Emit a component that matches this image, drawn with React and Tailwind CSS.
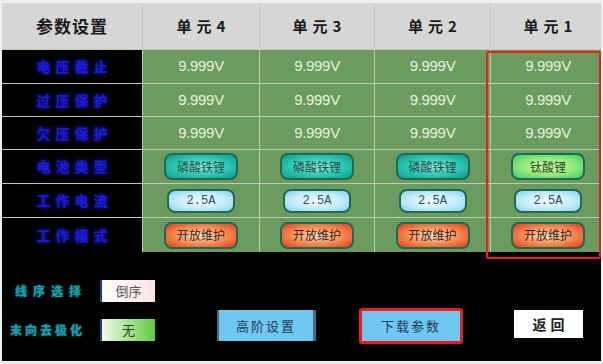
import React from "react";

const cjk = { fontFamily: '"Noto Sans CJK SC", "Noto Sans", sans-serif' };

const labels = ["电压截止", "过压保护", "欠压保护", "电池类型", "工作电流", "工作模式"];
const units = ["单元4", "单元3", "单元2", "单元1"];

function Value() {
  return (
    <div className="flex items-center justify-center bg-[#6b9b5f] text-[15px] text-[#e6f2de] font-['Liberation_Sans',sans-serif] tracking-[-0.3px]">
      9.999V
    </div>
  );
}

function Pill({ children, kind }) {
  const styles = {
    teal: "w-[74px] h-[27px] bg-[radial-gradient(ellipse_at_center,#8fe8d8_0%,#2bc6b2_55%,#0f9a8c_100%)] text-[#1f4f4a]",
    green: "w-[74px] h-[27px] bg-[radial-gradient(ellipse_at_center,#d8f8b0_0%,#8ee878_55%,#3fcc6a_100%)] text-[#234a20]",
    blue: "w-[68px] h-[24px] bg-[radial-gradient(ellipse_at_center,#f2fbff_0%,#c6ecfb_55%,#82d0f0_100%)] text-[#2b4f70]",
    red: "w-[74px] h-[27px] bg-[radial-gradient(ellipse_at_center,#f8e6c8_0%,#f4874e_55%,#ea3a1c_100%)] text-[#3a2010]",
  };
  return (
    <div className="flex items-center justify-center bg-[#6b9b5f]">
      <div
        className={`flex items-center justify-center rounded-[8px] border-[2px] border-[#1f6a52] text-[12px] ${styles[kind]}`}
        style={kind === "blue" ? { fontFamily: '"Liberation Mono", monospace' } : cjk}
      >
        {children}
      </div>
    </div>
  );
}

export default function App() {
  return (
    <div className="w-[603px] h-[364px] bg-[#eeeeee] pl-[2px] pr-[2px] pt-[3px] pb-[3px]" style={cjk}>
      <div className="relative w-full h-full bg-black overflow-hidden">
        <div className="grid grid-cols-[140px_116px_114px_115px_114px] grid-rows-[46px_33px_32px_32px_33px_33px_34px] gap-[1px] bg-[#b9cfb0]">
          <div className="flex items-center justify-center bg-[#d6d6d6] text-[17px] font-bold text-[#1a1a1a] tracking-[1px]">
            参数设置
          </div>
          {units.map((u) => (
            <div key={u} className="flex items-center justify-center bg-[#d6d6d6] text-[15px] font-bold text-[#1a1a1a] tracking-[5px] pl-[5px]">
              {u}
            </div>
          ))}

          {labels.map((l, i) => (
            <React.Fragment key={l}>
              <div className="flex items-center justify-center bg-black text-[14px] font-bold text-[#1a1ad8] tracking-[5px] pl-[5px] [text-shadow:0_0_4px_#2020ff]">
                {l}
              </div>
              {i < 3 && (
                <>
                  <Value />
                  <Value />
                  <Value />
                  <Value />
                </>
              )}
              {i === 3 && (
                <>
                  <Pill kind="teal">磷酸铁锂</Pill>
                  <Pill kind="teal">磷酸铁锂</Pill>
                  <Pill kind="teal">磷酸铁锂</Pill>
                  <Pill kind="green">钛酸锂</Pill>
                </>
              )}
              {i === 4 && (
                <>
                  <Pill kind="blue">2.5A</Pill>
                  <Pill kind="blue">2.5A</Pill>
                  <Pill kind="blue">2.5A</Pill>
                  <Pill kind="blue">2.5A</Pill>
                </>
              )}
              {i === 5 && (
                <>
                  <Pill kind="red">开放维护</Pill>
                  <Pill kind="red">开放维护</Pill>
                  <Pill kind="red">开放维护</Pill>
                  <Pill kind="red">开放维护</Pill>
                </>
              )}
            </React.Fragment>
          ))}
        </div>

        <div className="absolute left-[484px] top-[48px] w-[115px] h-[208px] border-[2px] border-[#ee1c1c] rounded-[2px] pointer-events-none" />

        <div className="flex items-start pt-[28px]">
          <div className="flex flex-col gap-[17px] pl-[8px]">
            <div className="flex items-center">
              <div className="w-[90px] pl-[5px] text-[12px] font-bold text-[#1aa0b0] tracking-[6px] [text-shadow:0_0_2px_#1aa0b0]">
                线序选择
              </div>
              <div className="flex items-center justify-center w-[55px] h-[22px] border-l-[2px] border-[#1a3a8a] bg-[linear-gradient(90deg,#ffffff_0%,#fbe4e4_100%)] text-[13px] text-[#555555]">
                倒序
              </div>
            </div>
            <div className="flex items-center">
              <div className="w-[90px] text-[12px] font-bold text-[#1aa0b0] tracking-[3px] [text-shadow:0_0_2px_#1aa0b0]">
                末向去极化
              </div>
              <div className="flex items-center justify-center w-[55px] h-[22px] border-l-[2px] border-[#1a3a8a] bg-[linear-gradient(90deg,#f0fbe8_0%,#5ecc3c_100%)] text-[13px] text-[#2a4a20]">
                无
              </div>
            </div>
          </div>

          <div className="ml-[62px] mt-[30px] flex items-center justify-center w-[99px] h-[31px] bg-[#6ec8f2] border-r-[3px] border-l-[2px] border-[#4a6a7a] text-[13px] text-[#1f3a5a] tracking-[2px]">
            高阶设置
          </div>

          <div className="ml-[43px] mt-[28px] flex items-center justify-center w-[104px] h-[36px] bg-[#6ec8f2] border-[3px] border-[#ee1c1c] rounded-[3px] text-[13px] text-[#1f3a5a] tracking-[2px]">
            下载参数
          </div>

          <div className="ml-[51px] mt-[30px] flex items-center justify-center w-[69px] h-[28px] bg-white text-[14px] font-bold text-[#222222] tracking-[4px] pl-[4px]">
            返回
          </div>
        </div>
      </div>
    </div>
  );
}
